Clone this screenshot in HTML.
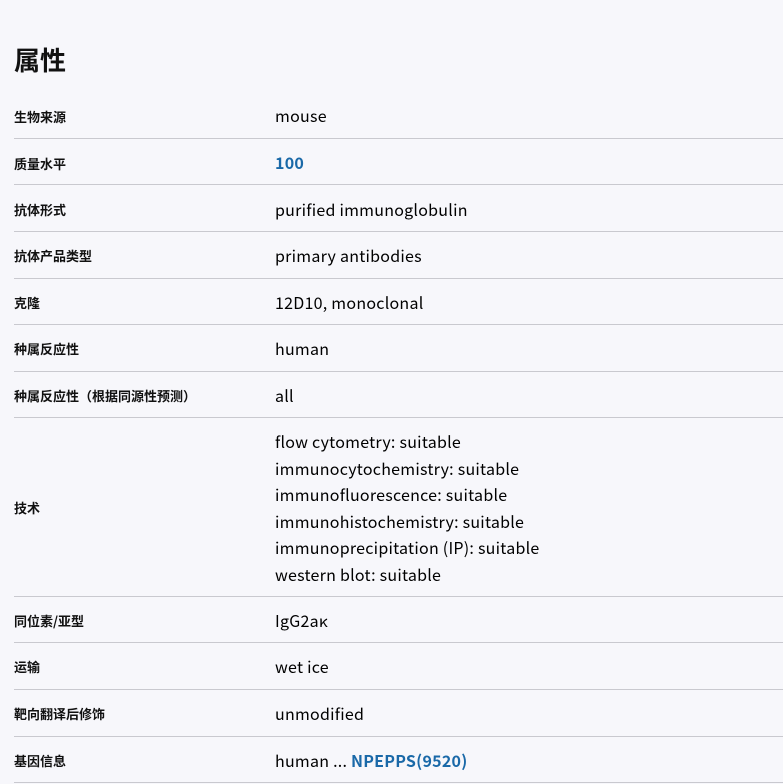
<!DOCTYPE html>
<html><head><meta charset="utf-8"><style>
body{margin:0;background:#f7f7fb;font-family:"Liberation Sans","Noto Sans CJK SC",sans-serif;color:#111;width:783px;height:784px;overflow:hidden;position:relative}
h1{position:absolute;left:14px;top:42px;margin:0;font-size:26px;line-height:36px;font-weight:bold;font-family:"Noto Sans CJK SC",sans-serif}
.row{position:absolute;left:14px;right:0;border-bottom:1px solid #c9c9cf}
.l{position:absolute;left:0;font-size:13px;font-weight:bold;font-family:"Noto Sans CJK SC",sans-serif}
.v{position:absolute;left:261px;font-size:16px;line-height:26.5px;letter-spacing:0.25px;color:#000;font-family:"Noto Sans CJK SC","Liberation Sans",sans-serif}
a{color:#1a69a8;font-weight:bold;text-decoration:none}
</style></head><body>
<h1>属性</h1>
<div class="row" style="top:92px;height:46px"><span class="l" style="top:15px">生物来源</span><span class="v" style="top:10px">mouse</span></div>
<div class="row" style="top:139px;height:45px"><span class="l" style="top:15px">质量水平</span><span class="v" style="top:10px"><a>100</a></span></div>
<div class="row" style="top:185px;height:46px"><span class="l" style="top:15px">抗体形式</span><span class="v" style="top:11px">purified immunoglobulin</span></div>
<div class="row" style="top:232px;height:46px"><span class="l" style="top:14px">抗体产品类型</span><span class="v" style="top:10px">primary antibodies</span></div>
<div class="row" style="top:279px;height:45px"><span class="l" style="top:14px">克隆</span><span class="v" style="top:10px">12D10, monoclonal</span></div>
<div class="row" style="top:325px;height:46px"><span class="l" style="top:14px">种属反应性</span><span class="v" style="top:10px">human</span></div>
<div class="row" style="top:372px;height:45px"><span class="l" style="top:14px">种属反应性（根据同源性预测）</span><span class="v" style="top:10px">all</span></div>
<div class="row" style="top:418px;height:178px"><span class="l" style="top:80px">技术</span><span class="v" style="top:10px">flow cytometry: suitable<br>immunocytochemistry: suitable<br>immunofluorescence: suitable<br>immunohistochemistry: suitable<br>immunoprecipitation (IP): suitable<br>western blot: suitable</span></div>
<div class="row" style="top:597px;height:45px"><span class="l" style="top:14px">同位素/亚型</span><span class="v" style="top:10px">IgG2aκ</span></div>
<div class="row" style="top:643px;height:46px"><span class="l" style="top:14px">运输</span><span class="v" style="top:10px">wet ice</span></div>
<div class="row" style="top:690px;height:46px"><span class="l" style="top:14px">靶向翻译后修饰</span><span class="v" style="top:10px">unmodified</span></div>
<div class="row" style="top:737px;height:45px"><span class="l" style="top:14px">基因信息</span><span class="v" style="top:10px">human ... <a>NPEPPS(9520)</a></span></div>
</body></html>
